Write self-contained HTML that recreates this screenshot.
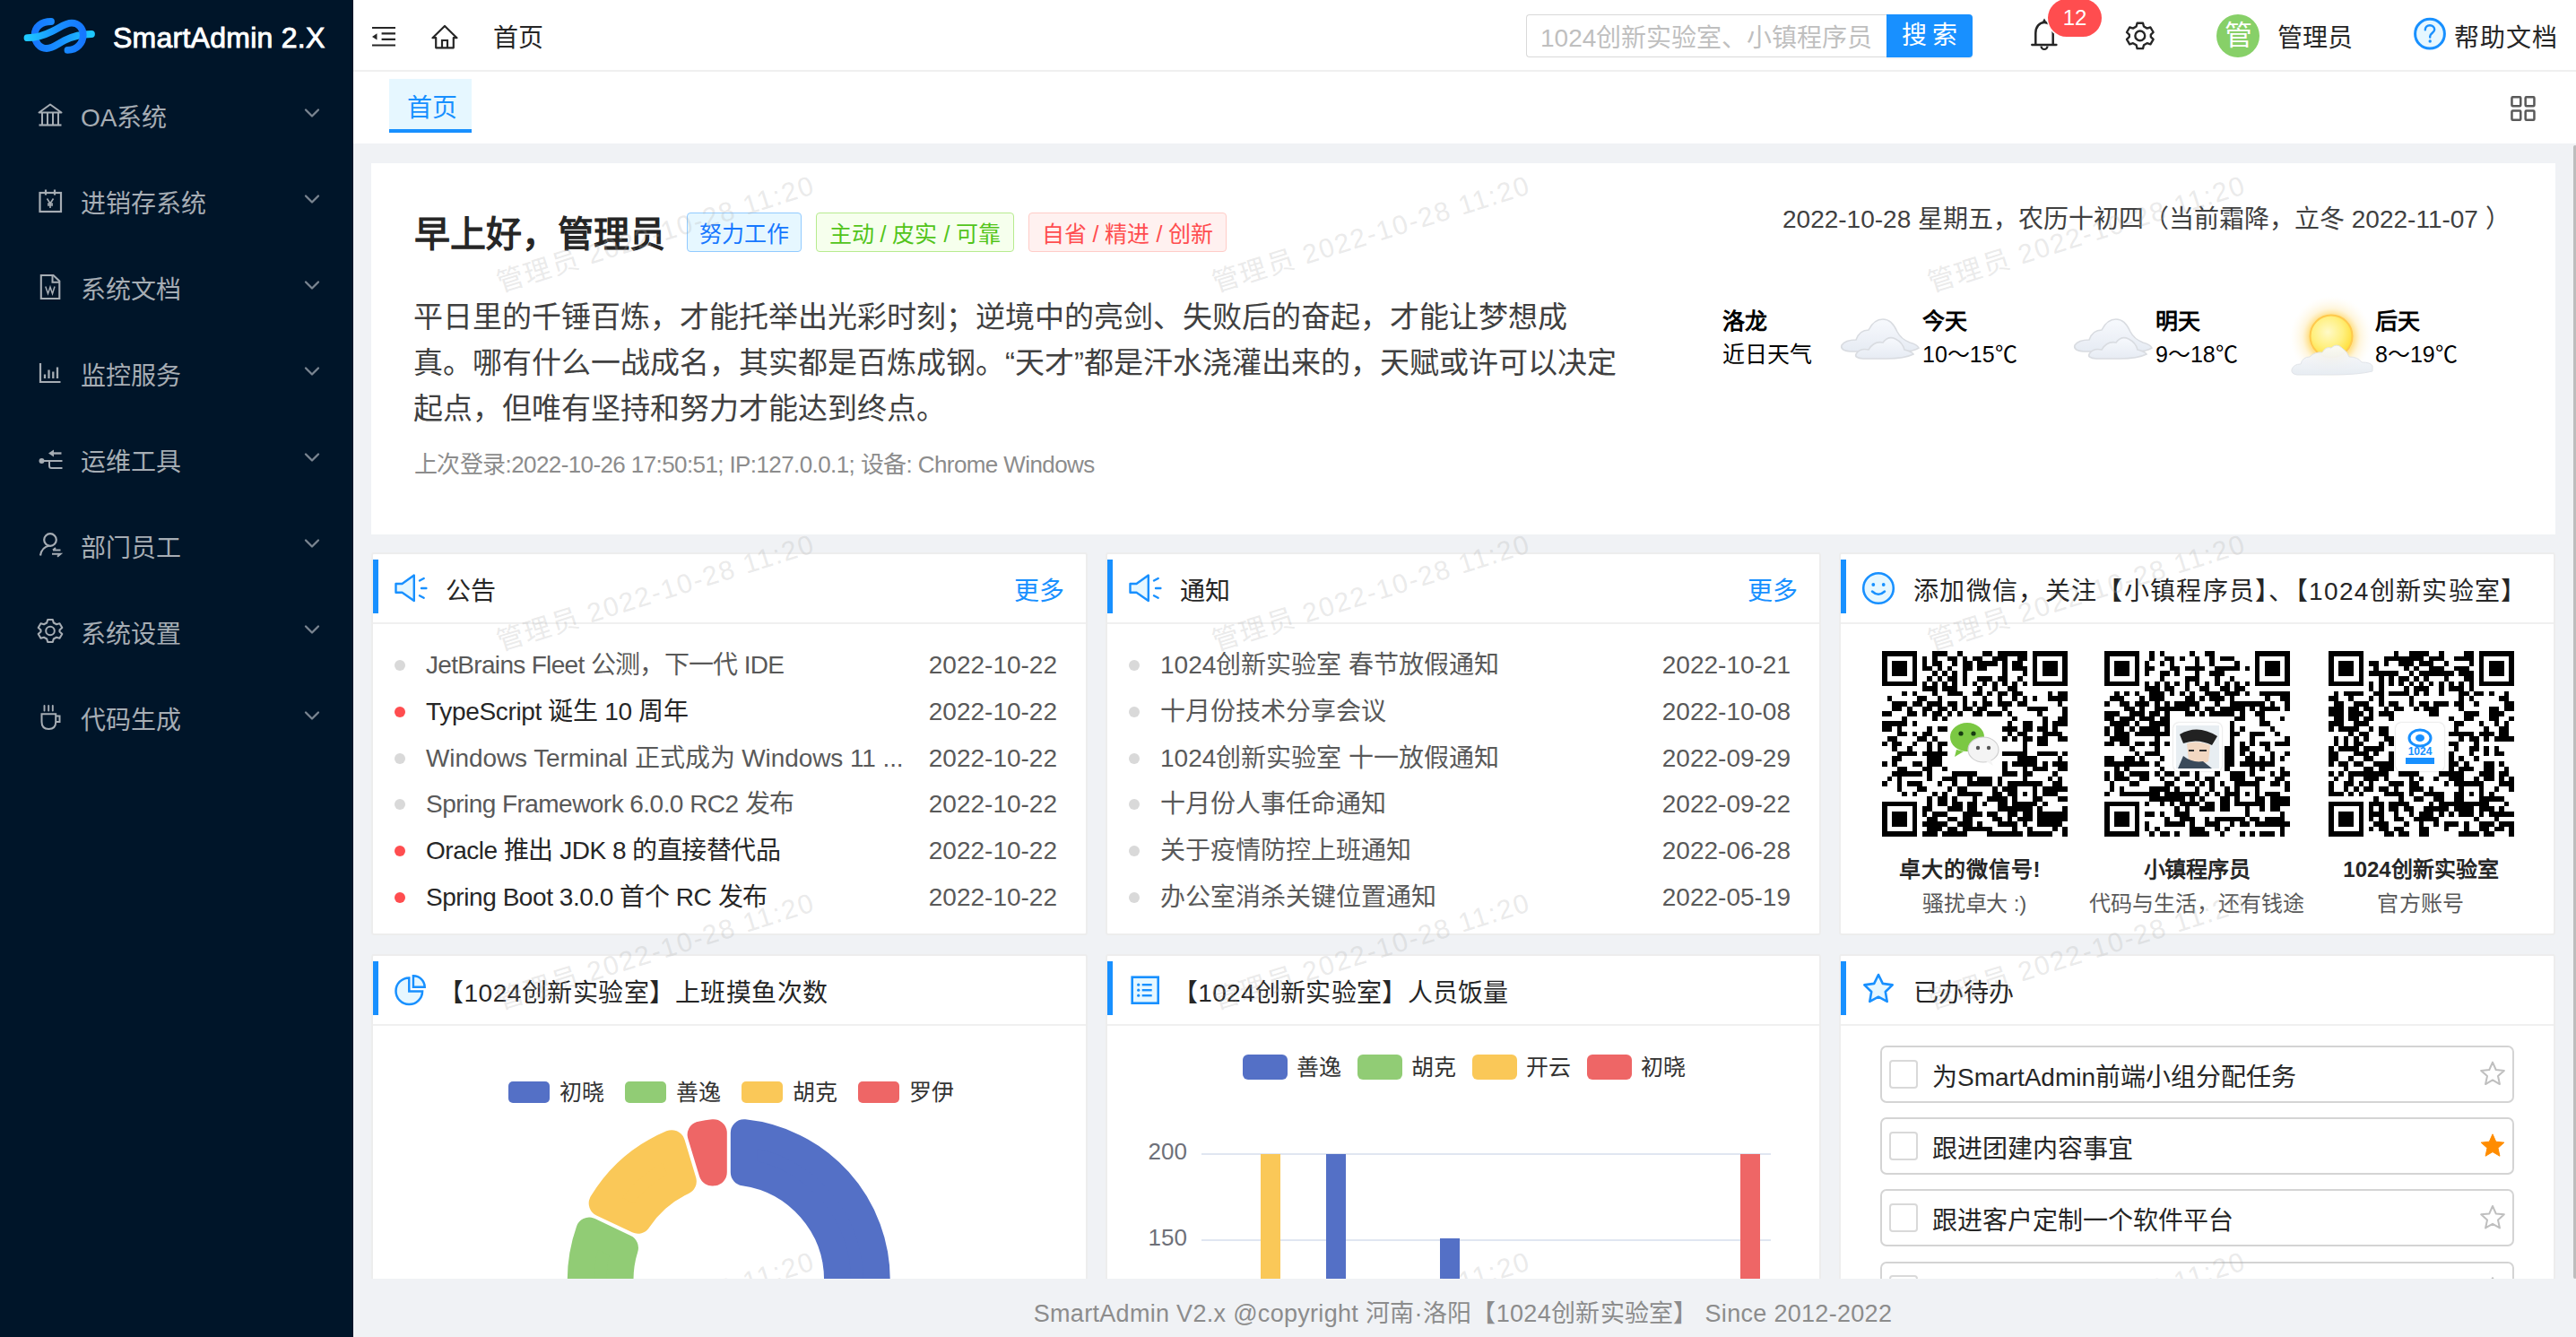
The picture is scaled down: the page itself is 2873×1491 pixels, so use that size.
<!DOCTYPE html>
<html lang="zh-CN"><head><meta charset="utf-8">
<style>
*{box-sizing:border-box;margin:0;padding:0}
html,body{width:2873px;height:1491px;overflow:hidden;background:#f0f2f5;font-family:"Liberation Sans",sans-serif;color:rgba(0,0,0,.85)}
.a{position:absolute;white-space:nowrap}
#sider{position:absolute;left:0;top:0;width:394px;height:1491px;background:#001529}
.mi{position:absolute;left:0;width:394px;height:96px}
.mi svg{position:absolute}
.mi .t{position:absolute;left:90px;top:3px;font-size:28px;line-height:96px;color:#a6adb4}
#header{position:absolute;left:394px;top:0;width:2479px;height:80px;background:#fff;border-bottom:2px solid #f0f0f0}
#tabs{position:absolute;left:394px;top:80px;width:2479px;height:80px;background:#fff}
.card{position:absolute;background:#fff;border:2px solid #ededed;border-radius:3px}
.card.g{border:0;border-radius:0}
.ch-h{position:absolute;left:0;top:0;right:0;height:78px;border-bottom:2px solid #f0f0f0}
.bar{position:absolute;left:2px;top:7px;width:6px;height:60px;background:#1890ff}
.ttl{position:absolute;top:0;line-height:76px;font-size:28px;color:rgba(0,0,0,.85)}
.tag{font-size:25px;line-height:47px;text-align:center;border-radius:4px}
.wm{font-size:30px;line-height:40px;letter-spacing:1.85px;color:rgba(175,175,175,.27);transform:rotate(-17.5deg);transform-origin:0 100%}
#footer{position:absolute;left:394px;top:1426px;width:2479px;height:65px;background:#f0f2f5;text-align:center;font-size:27px;line-height:78px;color:#8c8c8c;letter-spacing:0.3px;text-indent:-4px}
#sb{position:absolute;left:2870px;top:162px;width:4px;height:1264px;background:#bdbdbd;border-radius:2px}
</style></head>
<body>
<div id="sider">
<svg class="a" style="left:20px;top:15px" width="90" height="50" viewBox="0 0 90 50"><defs><linearGradient id="lg1" x1="0" x2="1" y1="0" y2="0"><stop offset="0" stop-color="#1ec8ff"/><stop offset=".55" stop-color="#1890ff"/><stop offset="1" stop-color="#1677ff"/></linearGradient><linearGradient id="lg2" x1="1" x2="0" y1="0" y2="0"><stop offset="0" stop-color="#1ec8ff"/><stop offset=".55" stop-color="#1890ff"/><stop offset="1" stop-color="#1677ff"/></linearGradient></defs>
<path d="M82 23C72 23 62 25 52 30C44 34 39 39 32 39C24 39 18.7 32 18.7 24C18.7 15 26 9 37 9" fill="none" stroke="url(#lg2)" stroke-width="7.8" stroke-linecap="round"/>
<path d="M10.5 27.2C20 27.2 28 25 38 20C48 15 53 10.7 60 10.7C67 10.7 72.7 16 72.7 24C72.7 33 66 40.8 55.5 40.9" fill="none" stroke="url(#lg1)" stroke-width="7.8" stroke-linecap="round"/></svg>
<div class="a" style="left:126px;top:20px;font-size:32px;line-height:44px;color:#fff;-webkit-text-stroke:0.9px #fff;letter-spacing:0.25px">SmartAdmin 2.X</div>
<div class="mi" style="top:81px"><svg class="ic" viewBox="0 0 40 40" style="left:38px;top:27px;width:40px;height:40px"><path d="M18 8.5 L5.5 17.5 H30.5 Z" fill="none" stroke="#a6adb4" stroke-width="2" stroke-linejoin="round"/><path d="M9 18v13M15 18v13M21 18v13M27 18v13" stroke="#a6adb4" stroke-width="2"/><path d="M5.5 31.5H30.5" stroke="#a6adb4" stroke-width="2.2"/></svg><span class="t">OA系统</span><svg class="ch" viewBox="0 0 40 40" style="left:330px;top:29px;width:40px;height:40px"><path d="M11 12.5L18 19.5L25 12.5" fill="none" stroke="#7a8591" stroke-width="2.3" stroke-linecap="round" stroke-linejoin="round"/></svg></div>
<div class="mi" style="top:177px"><svg class="ic" viewBox="0 0 40 40" style="left:38px;top:27px;width:40px;height:40px"><rect x="6.5" y="11" width="23.5" height="21" fill="none" stroke="#a6adb4" stroke-width="2.2"/><path d="M13 7.5v6M23 7.5v6" stroke="#a6adb4" stroke-width="2.2"/><path d="M14.5 17.5L18 23L21.5 17.5M15 25H21M15 23.2H21M18 22.5V28" fill="none" stroke="#a6adb4" stroke-width="1.6"/></svg><span class="t">进销存系统</span><svg class="ch" viewBox="0 0 40 40" style="left:330px;top:29px;width:40px;height:40px"><path d="M11 12.5L18 19.5L25 12.5" fill="none" stroke="#7a8591" stroke-width="2.3" stroke-linecap="round" stroke-linejoin="round"/></svg></div>
<div class="mi" style="top:273px"><svg class="ic" viewBox="0 0 40 40" style="left:38px;top:27px;width:40px;height:40px"><path d="M7.8 7H21.5L28.3 13.5V33H7.8Z" fill="none" stroke="#a6adb4" stroke-width="2.1" stroke-linejoin="miter"/><path d="M20.5 7.5V14.8H28" fill="none" stroke="#a6adb4" stroke-width="2"/><path d="M12.8 19.5L15.5 27.5L18 20L20.5 27.5L23 19.5" fill="none" stroke="#a6adb4" stroke-width="1.5"/></svg><span class="t">系统文档</span><svg class="ch" viewBox="0 0 40 40" style="left:330px;top:29px;width:40px;height:40px"><path d="M11 12.5L18 19.5L25 12.5" fill="none" stroke="#7a8591" stroke-width="2.3" stroke-linecap="round" stroke-linejoin="round"/></svg></div>
<div class="mi" style="top:369px"><svg class="ic" viewBox="0 0 40 40" style="left:38px;top:27px;width:40px;height:40px"><path d="M7 9V30H29.5" fill="none" stroke="#a6adb4" stroke-width="2.2"/><path d="M12 21.5V26M16.5 16.5V26M21.3 18.5V26M26 13.5V26" stroke="#a6adb4" stroke-width="2.3"/></svg><span class="t">监控服务</span><svg class="ch" viewBox="0 0 40 40" style="left:330px;top:29px;width:40px;height:40px"><path d="M11 12.5L18 19.5L25 12.5" fill="none" stroke="#7a8591" stroke-width="2.3" stroke-linecap="round" stroke-linejoin="round"/></svg></div>
<div class="mi" style="top:465px"><svg class="ic" viewBox="0 0 40 40" style="left:38px;top:27px;width:40px;height:40px"><path d="M22 9.5L16 13.5L22 17.5Z" fill="#a6adb4"/><path d="M21 13.5H30.5" stroke="#a6adb4" stroke-width="2.4"/><circle cx="8.5" cy="22" r="3" fill="#a6adb4"/><path d="M9 22H31.5M17 22.5V27.5Q17 30 19.5 30H31.5" fill="none" stroke="#a6adb4" stroke-width="2"/></svg><span class="t">运维工具</span><svg class="ch" viewBox="0 0 40 40" style="left:330px;top:29px;width:40px;height:40px"><path d="M11 12.5L18 19.5L25 12.5" fill="none" stroke="#7a8591" stroke-width="2.3" stroke-linecap="round" stroke-linejoin="round"/></svg></div>
<div class="mi" style="top:561px"><svg class="ic" viewBox="0 0 40 40" style="left:38px;top:27px;width:40px;height:40px"><circle cx="18" cy="14" r="6.8" fill="none" stroke="#a6adb4" stroke-width="2.2"/><path d="M7 31.5C8 25 12 21.5 17 20.5" fill="none" stroke="#a6adb4" stroke-width="2.2"/><path d="M21 25.5H29.5M24 23L21 25.5M20 29.8H29.5L26 32.8" fill="none" stroke="#a6adb4" stroke-width="2"/></svg><span class="t">部门员工</span><svg class="ch" viewBox="0 0 40 40" style="left:330px;top:29px;width:40px;height:40px"><path d="M11 12.5L18 19.5L25 12.5" fill="none" stroke="#7a8591" stroke-width="2.3" stroke-linecap="round" stroke-linejoin="round"/></svg></div>
<div class="mi" style="top:657px"><svg class="ic" viewBox="0 0 40 40" style="left:38px;top:27px;width:40px;height:40px"><g transform="translate(18 19.5)"><path d="M-2.8 -12.5H2.8L3.8 -9L7 -7.3L10.5 -8.2L13.3 -3.5L10.5 -1V1L13.3 3.5L10.5 8.2L7 7.3L3.8 9L2.8 12.5H-2.8L-3.8 9L-7 7.3L-10.5 8.2L-13.3 3.5L-10.5 1V-1L-13.3 -3.5L-10.5 -8.2L-7 -7.3L-3.8 -9Z" fill="none" stroke="#a6adb4" stroke-width="2.1" stroke-linejoin="round"/><circle cx="0" cy="0" r="4.8" fill="none" stroke="#a6adb4" stroke-width="2"/></g></svg><span class="t">系统设置</span><svg class="ch" viewBox="0 0 40 40" style="left:330px;top:29px;width:40px;height:40px"><path d="M11 12.5L18 19.5L25 12.5" fill="none" stroke="#7a8591" stroke-width="2.3" stroke-linecap="round" stroke-linejoin="round"/></svg></div>
<div class="mi" style="top:753px"><svg class="ic" viewBox="0 0 40 40" style="left:38px;top:27px;width:40px;height:40px"><path d="M11.5 7v5.5M16.2 7v5.5M20.8 7v5.5" stroke="#a6adb4" stroke-width="1.9" stroke-linecap="round"/><path d="M8.5 16.3H24.2V25Q24.2 33 16.3 33Q8.5 33 8.5 25Z" fill="none" stroke="#a6adb4" stroke-width="2"/><path d="M24.2 18.5H28.5V25H24.2" fill="none" stroke="#a6adb4" stroke-width="2"/></svg><span class="t">代码生成</span><svg class="ch" viewBox="0 0 40 40" style="left:330px;top:29px;width:40px;height:40px"><path d="M11 12.5L18 19.5L25 12.5" fill="none" stroke="#7a8591" stroke-width="2.3" stroke-linecap="round" stroke-linejoin="round"/></svg></div>
</div>
<div id="header"></div>
<svg class="a" style="left:410px;top:20px" width="40" height="40" viewBox="410 20 40 40"><path d="M415 31H441M425.6 37.3H441M425.6 43.8H441M415 50.5H441" stroke="#262626" stroke-width="2.2"/><path d="M420.5 37.2V44.6L415 40.9Z" fill="#262626"/></svg>
<svg class="a" style="left:476px;top:20px" width="40" height="40" viewBox="476 20 40 40"><path d="M496 29L482.5 42.2H486.2V53.3H505.8V42.2H509.5Z" fill="none" stroke="#262626" stroke-width="2.2" stroke-linejoin="round"/><path d="M493 53.3V45H499V53.3" fill="none" stroke="#262626" stroke-width="2.2"/></svg>
<div class="a" style="left:550px;top:23px;font-size:28px;line-height:40px;color:#262626">首页</div>
<div class="a" style="left:1702px;top:16px;width:403px;height:48px;border:1.5px solid #d9d9d9;border-right:0;border-radius:4px 0 0 4px;background:#fff"></div>
<div class="a" style="left:1718px;top:23px;font-size:28px;line-height:40px;color:#bfbfbf">1024创新实验室、小镇程序员</div>
<div class="a" style="left:2104px;top:16px;width:96px;height:48px;background:#1890ff;border-radius:0 4px 4px 0;box-shadow:0 2px 0 rgba(0,0,0,.045);color:#fff;font-size:28px;line-height:48px;text-align:center;letter-spacing:6px;text-indent:6px">搜索</div>
<svg class="a" style="left:2255px;top:10px" width="50" height="50" viewBox="2255 10 50 50"><path d="M2266.2 50H2293.5" stroke="#262626" stroke-width="2.3" stroke-linecap="round"/><path d="M2270.3 50V37C2270.3 30 2274.5 25 2280 25C2285.5 25 2289.7 30 2289.7 37V50" fill="none" stroke="#262626" stroke-width="2.5"/><path d="M2280 20.5L2282 24H2278Z" fill="#262626"/><path d="M2276.5 51.5A3.5 3.5 0 0 0 2283.5 51.5" fill="none" stroke="#262626" stroke-width="2.2"/></svg>
<div class="a" style="left:2284px;top:-1px;width:60px;height:42px;border-radius:21px;background:#ff4d4f;box-shadow:0 0 0 1.5px #fff;color:#fff;font-size:24px;line-height:42px;text-align:center">12</div>
<svg class="a" style="left:2365px;top:18px" width="42" height="44" viewBox="-21 -22 42 44"><path d="M-3.2 -14.2H3.2L4.2 -10.4L7.8 -8.3L11.6 -9.4L14.8 -3.9L12 -1.2V1.2L14.8 3.9L11.6 9.4L7.8 8.3L4.2 10.4L3.2 14.2H-3.2L-4.2 10.4L-7.8 8.3L-11.6 9.4L-14.8 3.9L-12 1.2V-1.2L-14.8 -3.9L-11.6 -9.4L-7.8 -8.3L-4.2 -10.4Z" fill="none" stroke="#262626" stroke-width="2.4" stroke-linejoin="round" transform="translate(0.8 -0.1)"/><circle cx="0.8" cy="-0.1" r="5.4" fill="none" stroke="#262626" stroke-width="2.4"/></svg>
<div class="a" style="left:2472px;top:16px;width:48px;height:48px;border-radius:50%;background:#87d068;color:#fff;font-size:31px;line-height:48px;text-align:center">管</div>
<div class="a" style="left:2540px;top:23px;font-size:28px;line-height:40px;color:#262626">管理员</div>
<svg class="a" style="left:2690px;top:18px" width="40" height="40" viewBox="2690 18 40 40"><circle cx="2710" cy="37.7" r="16.4" fill="#e6f7ff" stroke="#1890ff" stroke-width="3"/><path d="M2704.8 33.2C2704.8 30.2 2707 28.2 2710 28.2C2713 28.2 2715.2 30.2 2715.2 33C2715.2 36.5 2710.2 37 2710.2 40.6V41.5" fill="none" stroke="#1890ff" stroke-width="2.4" stroke-linecap="round"/><circle cx="2710.2" cy="46" r="1.7" fill="#1890ff"/></svg>
<div class="a" style="left:2737px;top:23px;font-size:28px;line-height:40px;color:#262626;letter-spacing:1px">帮助文档</div>
<div id="tabs"></div>
<div class="a" style="left:434px;top:88px;width:92px;height:60px;background:#e6f7ff;border-bottom:4px solid #1890ff"></div>
<div class="a" style="left:454px;top:101px;font-size:28px;line-height:40px;color:#1890ff">首页</div>
<svg class="a" style="left:2790px;top:100px" width="50" height="50" viewBox="2790 100 50 50"><g fill="none" stroke="#595959" stroke-width="2.5"><rect x="2801.45" y="108.25" width="9.8" height="10.1" rx="1"/><rect x="2816.65" y="108.25" width="9.8" height="10.1" rx="1"/><rect x="2801.45" y="123.55" width="9.8" height="10.1" rx="1"/><rect x="2816.65" y="123.55" width="9.8" height="10.1" rx="1"/></g></svg>
<div id="content"></div>
<div class="card g" style="left:414px;top:182px;width:2436px;height:414px"></div>
<div class="a" style="left:462px;top:231px;font-size:40px;line-height:60px;font-weight:bold;color:#262626">早上好，管理员</div>
<div class="a tag" style="left:766px;top:237px;width:128px;height:44px;background:#e6f7ff;border:1.5px solid #91caff;color:#1677ff">努力工作</div>
<div class="a tag" style="left:910px;top:237px;width:221px;height:44px;background:#f6ffed;border:1.5px solid #b7eb8f;color:#52c41a">主动 / 皮实 / 可靠</div>
<div class="a tag" style="left:1147px;top:237px;width:221px;height:44px;background:#fff1f0;border:1.5px solid #ffccc7;color:#ff4d4f">自省 / 精进 / 创新</div>
<div class="a" style="left:461px;top:328px;font-size:33px;line-height:51px;color:#404040;white-space:normal;width:1400px">平日里的千锤百炼，才能托举出光彩时刻；逆境中的亮剑、失败后的奋起，才能让梦想成<br>真。哪有什么一战成名，其实都是百炼成钢。“天才”都是汗水浇灌出来的，天赋或许可以决定<br>起点，但唯有坚持和努力才能达到终点。</div>
<div class="a" style="left:462px;top:500px;font-size:26px;line-height:36px;color:#8c8c8c;letter-spacing:-0.6px">上次登录:2022-10-26 17:50:51; IP:127.0.0.1; 设备: Chrome Windows</div>
<div class="a" style="left:1988px;top:225px;font-size:28px;line-height:40px;color:#404040">2022-10-28 星期五，农历十初四（当前霜降，立冬 2022-11-07 ）</div>
<div class="a" style="left:1921px;top:341px;font-size:25px;line-height:34px;font-weight:bold;color:#000">洛龙</div>
<div class="a" style="left:1921px;top:378px;font-size:25px;line-height:34px;color:#000">近日天气</div>
<svg class="a" style="left:2044px;top:348px" width="100" height="56" viewBox="0 0 100 56"><defs><linearGradient id="cg1" x1="0" y1="0" x2="0" y2="1"><stop offset="0" stop-color="#f7f9fd"/><stop offset="1" stop-color="#e6ebf3"/></linearGradient></defs><g fill="url(#cg1)" stroke="#d9dce1" stroke-width="1.6"><path d="M10 37Q14 31 26 31Q30 20 40 20Q46 8 56 8Q66 8 72 22Q76 30 86 34Q94 36 96 40Q90 44 78 44H20Q8 43 10 37Z"/><path d="M26 47Q30 40 40 42Q46 32 56 34Q62 26 70 30Q78 34 80 42Q88 44 90 47Q80 52 60 52H34Q24 51 26 47Z"/></g></svg>
<div class="a" style="left:2144px;top:341px;font-size:25px;line-height:34px;font-weight:bold;color:#000">今天</div>
<div class="a" style="left:2144px;top:378px;font-size:25px;line-height:34px;color:#000">10～15℃</div>
<svg class="a" style="left:2304px;top:348px" width="100" height="56" viewBox="0 0 100 56"><defs><linearGradient id="cg2" x1="0" y1="0" x2="0" y2="1"><stop offset="0" stop-color="#f7f9fd"/><stop offset="1" stop-color="#e6ebf3"/></linearGradient></defs><g fill="url(#cg2)" stroke="#d9dce1" stroke-width="1.6"><path d="M10 37Q14 31 26 31Q30 20 40 20Q46 8 56 8Q66 8 72 22Q76 30 86 34Q94 36 96 40Q90 44 78 44H20Q8 43 10 37Z"/><path d="M26 47Q30 40 40 42Q46 32 56 34Q62 26 70 30Q78 34 80 42Q88 44 90 47Q80 52 60 52H34Q24 51 26 47Z"/></g></svg>
<div class="a" style="left:2404px;top:341px;font-size:25px;line-height:34px;font-weight:bold;color:#000">明天</div>
<div class="a" style="left:2404px;top:378px;font-size:25px;line-height:34px;color:#000">9～18℃</div>
<svg class="a" style="left:2550px;top:326px" width="100" height="96" viewBox="0 0 100 96"><defs><radialGradient id="sg" cx="50" cy="50" r="46" gradientUnits="userSpaceOnUse"><stop offset="0" stop-color="#ffd86a" stop-opacity=".9"/><stop offset=".55" stop-color="#ffd86a" stop-opacity=".75"/><stop offset=".7" stop-color="#ffeab0" stop-opacity=".45"/><stop offset="1" stop-color="#fff8e6" stop-opacity="0"/></radialGradient><radialGradient id="sg2" cx=".42" cy=".4" r=".6"><stop offset="0" stop-color="#fffac8"/><stop offset=".6" stop-color="#fff080"/><stop offset="1" stop-color="#ffe040"/></radialGradient><linearGradient id="sc" x1="0" y1="0" x2="0" y2="1"><stop offset="0" stop-color="#fbfcfe"/><stop offset="1" stop-color="#e6ebf2"/></linearGradient></defs><circle cx="50" cy="50" r="46" fill="url(#sg)"/><circle cx="50" cy="49" r="23.5" fill="url(#sg2)" stroke="#ffc94d" stroke-width="2"/><path d="M6 86Q8 80 16 80Q18 72 26 72Q32 66 40 67Q44 60 50 62Q56 56 62 62Q68 66 70 72Q80 72 84 78Q94 78 96 82V88Q80 92 50 92H12Q5 91 6 86Z" fill="url(#sc)" stroke="#dfe3e8" stroke-width="1" opacity=".92"/></svg>
<div class="a" style="left:2649px;top:341px;font-size:25px;line-height:34px;font-weight:bold;color:#000">后天</div>
<div class="a" style="left:2649px;top:378px;font-size:25px;line-height:34px;color:#000">8～19℃</div>

<!--MID-->
<div class="card" style="left:414px;top:616px;width:799px;height:427px"></div>
<div class="a" style="left:416px;top:624px;width:6px;height:60px;background:#1890ff"></div>
<div class="a" style="left:416px;top:694px;width:795px;height:2px;background:#f0f0f0"></div>
<svg class="a" style="left:414px;top:616px" width="80" height="80" viewBox="0 0 80 80"><path d="M27.5 35H34.5L47.8 25.6V54L34.5 44.8H27.5Z" fill="#e6f7ff" stroke="#1890ff" stroke-width="2.4" stroke-linejoin="round"/><path d="M54 31.5L58.7 29M56 40H61.4M54 48.3L58.7 50.8" stroke="#1890ff" stroke-width="2.4" stroke-linecap="round"/></svg>
<div class="a" style="left:497px;top:640px;font-size:28px;line-height:40px;color:#262626;letter-spacing:0px">公告</div>
<div class="a" style="left:1131px;top:640px;font-size:28px;line-height:40px;color:#1890ff">更多</div>
<div class="a" style="left:440px;top:736.0px;width:12px;height:12px;border-radius:50%;background:#d9d9d9"></div>
<div class="a" style="left:475px;top:722.0px;font-size:28px;line-height:40px;color:#595959;letter-spacing:-0.68px">JetBrains Fleet 公测，下一代 IDE</div>
<div class="a" style="left:1035px;top:722.0px;width:144px;text-align:right;font-size:28px;line-height:40px;color:#595959">2022-10-22</div>
<div class="a" style="left:440px;top:787.8px;width:12px;height:12px;border-radius:50%;background:#ff4d4f"></div>
<div class="a" style="left:475px;top:773.8px;font-size:28px;line-height:40px;color:#262626;letter-spacing:-0.33px">TypeScript 诞生 10 周年</div>
<div class="a" style="left:1035px;top:773.8px;width:144px;text-align:right;font-size:28px;line-height:40px;color:#595959">2022-10-22</div>
<div class="a" style="left:440px;top:839.6px;width:12px;height:12px;border-radius:50%;background:#d9d9d9"></div>
<div class="a" style="left:475px;top:825.6px;font-size:28px;line-height:40px;color:#595959;letter-spacing:-0.09px">Windows Terminal 正式成为 Windows 11 ...</div>
<div class="a" style="left:1035px;top:825.6px;width:144px;text-align:right;font-size:28px;line-height:40px;color:#595959">2022-10-22</div>
<div class="a" style="left:440px;top:891.4px;width:12px;height:12px;border-radius:50%;background:#d9d9d9"></div>
<div class="a" style="left:475px;top:877.4px;font-size:28px;line-height:40px;color:#595959;letter-spacing:-0.54px">Spring Framework 6.0.0 RC2 发布</div>
<div class="a" style="left:1035px;top:877.4px;width:144px;text-align:right;font-size:28px;line-height:40px;color:#595959">2022-10-22</div>
<div class="a" style="left:440px;top:943.2px;width:12px;height:12px;border-radius:50%;background:#ff4d4f"></div>
<div class="a" style="left:475px;top:929.2px;font-size:28px;line-height:40px;color:#262626;letter-spacing:-0.48px">Oracle 推出 JDK 8 的直接替代品</div>
<div class="a" style="left:1035px;top:929.2px;width:144px;text-align:right;font-size:28px;line-height:40px;color:#595959">2022-10-22</div>
<div class="a" style="left:440px;top:995.0px;width:12px;height:12px;border-radius:50%;background:#ff4d4f"></div>
<div class="a" style="left:475px;top:981.0px;font-size:28px;line-height:40px;color:#262626;letter-spacing:-0.44px">Spring Boot 3.0.0 首个 RC 发布</div>
<div class="a" style="left:1035px;top:981.0px;width:144px;text-align:right;font-size:28px;line-height:40px;color:#595959">2022-10-22</div>
<div class="card" style="left:1233px;top:616px;width:798px;height:427px"></div>
<div class="a" style="left:1235px;top:624px;width:6px;height:60px;background:#1890ff"></div>
<div class="a" style="left:1235px;top:694px;width:794px;height:2px;background:#f0f0f0"></div>
<svg class="a" style="left:1233px;top:616px" width="80" height="80" viewBox="0 0 80 80"><path d="M27.5 35H34.5L47.8 25.6V54L34.5 44.8H27.5Z" fill="#e6f7ff" stroke="#1890ff" stroke-width="2.4" stroke-linejoin="round"/><path d="M54 31.5L58.7 29M56 40H61.4M54 48.3L58.7 50.8" stroke="#1890ff" stroke-width="2.4" stroke-linecap="round"/></svg>
<div class="a" style="left:1316px;top:640px;font-size:28px;line-height:40px;color:#262626;letter-spacing:0px">通知</div>
<div class="a" style="left:1949px;top:640px;font-size:28px;line-height:40px;color:#1890ff">更多</div>
<div class="a" style="left:1259px;top:736.0px;width:12px;height:12px;border-radius:50%;background:#d9d9d9"></div>
<div class="a" style="left:1294px;top:722.0px;font-size:28px;line-height:40px;color:#595959">1024创新实验室 春节放假通知</div>
<div class="a" style="left:1853px;top:722.0px;width:144px;text-align:right;font-size:28px;line-height:40px;color:#595959">2022-10-21</div>
<div class="a" style="left:1259px;top:787.8px;width:12px;height:12px;border-radius:50%;background:#d9d9d9"></div>
<div class="a" style="left:1294px;top:773.8px;font-size:28px;line-height:40px;color:#595959">十月份技术分享会议</div>
<div class="a" style="left:1853px;top:773.8px;width:144px;text-align:right;font-size:28px;line-height:40px;color:#595959">2022-10-08</div>
<div class="a" style="left:1259px;top:839.6px;width:12px;height:12px;border-radius:50%;background:#d9d9d9"></div>
<div class="a" style="left:1294px;top:825.6px;font-size:28px;line-height:40px;color:#595959">1024创新实验室 十一放假通知</div>
<div class="a" style="left:1853px;top:825.6px;width:144px;text-align:right;font-size:28px;line-height:40px;color:#595959">2022-09-29</div>
<div class="a" style="left:1259px;top:891.4px;width:12px;height:12px;border-radius:50%;background:#d9d9d9"></div>
<div class="a" style="left:1294px;top:877.4px;font-size:28px;line-height:40px;color:#595959">十月份人事任命通知</div>
<div class="a" style="left:1853px;top:877.4px;width:144px;text-align:right;font-size:28px;line-height:40px;color:#595959">2022-09-22</div>
<div class="a" style="left:1259px;top:943.2px;width:12px;height:12px;border-radius:50%;background:#d9d9d9"></div>
<div class="a" style="left:1294px;top:929.2px;font-size:28px;line-height:40px;color:#595959">关于疫情防控上班通知</div>
<div class="a" style="left:1853px;top:929.2px;width:144px;text-align:right;font-size:28px;line-height:40px;color:#595959">2022-06-28</div>
<div class="a" style="left:1259px;top:995.0px;width:12px;height:12px;border-radius:50%;background:#d9d9d9"></div>
<div class="a" style="left:1294px;top:981.0px;font-size:28px;line-height:40px;color:#595959">办公室消杀关键位置通知</div>
<div class="a" style="left:1853px;top:981.0px;width:144px;text-align:right;font-size:28px;line-height:40px;color:#595959">2022-05-19</div>
<div class="card" style="left:2051px;top:616px;width:799px;height:427px"></div>
<div class="a" style="left:2053px;top:624px;width:6px;height:60px;background:#1890ff"></div>
<div class="a" style="left:2053px;top:694px;width:795px;height:2px;background:#f0f0f0"></div>
<svg class="a" style="left:2051px;top:616px" width="80" height="80" viewBox="0 0 80 80"><circle cx="44" cy="40" r="16.8" fill="#e6f7ff" stroke="#1890ff" stroke-width="2.6"/><circle cx="38.3" cy="36" r="1.9" fill="#1890ff"/><circle cx="49.7" cy="36" r="1.9" fill="#1890ff"/><path d="M37 43.5Q44 50 51 43.5" fill="none" stroke="#1890ff" stroke-width="2.5" stroke-linecap="round"/></svg>
<div class="a" style="left:2134px;top:640px;font-size:28px;line-height:40px;color:#262626;letter-spacing:1.32px">添加微信，关注【小镇程序员】、【1024创新实验室】</div>
<svg class="a" style="left:2099px;top:726px" width="207" height="207" viewBox="0 0 37 37" shape-rendering="crispEdges"><path d="M0 0h7v1h-7zM10 0h3v1h-3zM15 0h1v1h-1zM20 0h2v1h-2zM23 0h6v1h-6zM30 0h7v1h-7zM0 1h1v1h-1zM6 1h1v1h-1zM8 1h1v1h-1zM10 1h1v1h-1zM13 1h2v1h-2zM16 1h1v1h-1zM18 1h2v1h-2zM22 1h3v1h-3zM27 1h2v1h-2zM30 1h1v1h-1zM36 1h1v1h-1zM0 2h1v1h-1zM2 2h3v1h-3zM6 2h1v1h-1zM8 2h1v1h-1zM10 2h2v1h-2zM14 2h1v1h-1zM16 2h2v1h-2zM19 2h4v1h-4zM24 2h1v1h-1zM26 2h2v1h-2zM30 2h1v1h-1zM32 2h3v1h-3zM36 2h1v1h-1zM0 3h1v1h-1zM2 3h3v1h-3zM6 3h1v1h-1zM8 3h2v1h-2zM11 3h1v1h-1zM13 3h1v1h-1zM16 3h2v1h-2zM19 3h2v1h-2zM24 3h1v1h-1zM26 3h3v1h-3zM30 3h1v1h-1zM32 3h3v1h-3zM36 3h1v1h-1zM0 4h1v1h-1zM2 4h3v1h-3zM6 4h1v1h-1zM10 4h1v1h-1zM12 4h1v1h-1zM14 4h1v1h-1zM16 4h1v1h-1zM24 4h1v1h-1zM28 4h1v1h-1zM30 4h1v1h-1zM32 4h3v1h-3zM36 4h1v1h-1zM0 5h1v1h-1zM6 5h1v1h-1zM9 5h1v1h-1zM11 5h1v1h-1zM13 5h2v1h-2zM16 5h1v1h-1zM19 5h3v1h-3zM23 5h2v1h-2zM27 5h1v1h-1zM30 5h1v1h-1zM36 5h1v1h-1zM0 6h7v1h-7zM8 6h1v1h-1zM10 6h1v1h-1zM12 6h1v1h-1zM14 6h1v1h-1zM16 6h1v1h-1zM18 6h1v1h-1zM20 6h1v1h-1zM22 6h1v1h-1zM24 6h1v1h-1zM26 6h1v1h-1zM28 6h1v1h-1zM30 6h7v1h-7zM8 7h3v1h-3zM12 7h3v1h-3zM19 7h1v1h-1zM22 7h1v1h-1zM25 7h2v1h-2zM4 8h1v1h-1zM6 8h1v1h-1zM10 8h1v1h-1zM13 8h3v1h-3zM18 8h2v1h-2zM21 8h1v1h-1zM23 8h2v1h-2zM26 8h2v1h-2zM33 8h1v1h-1zM35 8h2v1h-2zM1 9h1v1h-1zM7 9h2v1h-2zM11 9h1v1h-1zM16 9h1v1h-1zM20 9h1v1h-1zM23 9h1v1h-1zM26 9h1v1h-1zM28 9h1v1h-1zM30 9h1v1h-1zM33 9h4v1h-4zM2 10h3v1h-3zM6 10h2v1h-2zM9 10h3v1h-3zM13 10h2v1h-2zM16 10h1v1h-1zM18 10h1v1h-1zM20 10h2v1h-2zM23 10h3v1h-3zM27 10h2v1h-2zM35 10h1v1h-1zM2 11h2v1h-2zM5 11h1v1h-1zM8 11h2v1h-2zM11 11h2v1h-2zM14 11h1v1h-1zM16 11h2v1h-2zM19 11h2v1h-2zM24 11h1v1h-1zM29 11h4v1h-4zM36 11h1v1h-1zM0 12h2v1h-2zM5 12h2v1h-2zM8 12h1v1h-1zM10 12h2v1h-2zM13 12h1v1h-1zM15 12h1v1h-1zM18 12h2v1h-2zM21 12h3v1h-3zM25 12h1v1h-1zM31 12h1v1h-1zM36 12h1v1h-1zM4 13h1v1h-1zM10 13h1v1h-1zM12 13h1v1h-1zM26 13h1v1h-1zM32 13h1v1h-1zM35 13h2v1h-2zM0 14h5v1h-5zM6 14h1v1h-1zM25 14h1v1h-1zM28 14h2v1h-2zM32 14h1v1h-1zM34 14h3v1h-3zM0 15h2v1h-2zM3 15h1v1h-1zM9 15h1v1h-1zM11 15h2v1h-2zM24 15h3v1h-3zM28 15h2v1h-2zM31 15h2v1h-2zM34 15h1v1h-1zM3 16h2v1h-2zM6 16h1v1h-1zM8 16h2v1h-2zM25 16h1v1h-1zM27 16h2v1h-2zM32 16h4v1h-4zM1 17h2v1h-2zM7 17h2v1h-2zM10 17h1v1h-1zM24 17h1v1h-1zM26 17h1v1h-1zM28 17h2v1h-2zM31 17h2v1h-2zM35 17h2v1h-2zM0 18h1v1h-1zM2 18h2v1h-2zM6 18h1v1h-1zM9 18h1v1h-1zM11 18h2v1h-2zM28 18h1v1h-1zM31 18h2v1h-2zM2 19h1v1h-1zM5 19h1v1h-1zM9 19h1v1h-1zM11 19h1v1h-1zM28 19h1v1h-1zM3 20h4v1h-4zM8 20h5v1h-5zM24 20h5v1h-5zM31 20h4v1h-4zM36 20h1v1h-1zM2 21h2v1h-2zM9 21h3v1h-3zM27 21h4v1h-4zM35 21h1v1h-1zM0 22h1v1h-1zM2 22h1v1h-1zM6 22h2v1h-2zM9 22h3v1h-3zM24 22h1v1h-1zM26 22h5v1h-5zM32 22h1v1h-1zM34 22h3v1h-3zM3 23h2v1h-2zM8 23h2v1h-2zM12 23h1v1h-1zM24 23h1v1h-1zM28 23h1v1h-1zM30 23h3v1h-3zM35 23h2v1h-2zM2 24h6v1h-6zM9 24h1v1h-1zM14 24h5v1h-5zM24 24h3v1h-3zM28 24h2v1h-2zM34 24h1v1h-1zM1 25h1v1h-1zM3 25h1v1h-1zM9 25h1v1h-1zM12 25h3v1h-3zM17 25h1v1h-1zM19 25h3v1h-3zM23 25h1v1h-1zM28 25h1v1h-1zM33 25h1v1h-1zM35 25h1v1h-1zM0 26h1v1h-1zM3 26h1v1h-1zM5 26h3v1h-3zM11 26h1v1h-1zM14 26h1v1h-1zM17 26h5v1h-5zM23 26h1v1h-1zM25 26h7v1h-7zM34 26h2v1h-2zM3 27h1v1h-1zM7 27h2v1h-2zM13 27h1v1h-1zM15 27h2v1h-2zM22 27h1v1h-1zM24 27h3v1h-3zM30 27h1v1h-1zM32 27h5v1h-5zM4 28h1v1h-1zM6 28h1v1h-1zM10 28h1v1h-1zM12 28h1v1h-1zM15 28h5v1h-5zM22 28h2v1h-2zM25 28h2v1h-2zM28 28h1v1h-1zM30 28h1v1h-1zM32 28h3v1h-3zM9 29h1v1h-1zM11 29h2v1h-2zM14 29h1v1h-1zM18 29h1v1h-1zM21 29h4v1h-4zM26 29h1v1h-1zM30 29h2v1h-2zM35 29h2v1h-2zM0 30h7v1h-7zM9 30h1v1h-1zM11 30h2v1h-2zM14 30h2v1h-2zM17 30h2v1h-2zM20 30h1v1h-1zM23 30h2v1h-2zM26 30h5v1h-5zM32 30h1v1h-1zM0 31h1v1h-1zM6 31h1v1h-1zM8 31h2v1h-2zM13 31h3v1h-3zM17 31h2v1h-2zM23 31h7v1h-7zM31 31h1v1h-1zM36 31h1v1h-1zM0 32h1v1h-1zM2 32h3v1h-3zM6 32h1v1h-1zM8 32h1v1h-1zM10 32h3v1h-3zM16 32h4v1h-4zM21 32h2v1h-2zM25 32h2v1h-2zM28 32h2v1h-2zM31 32h6v1h-6zM0 33h1v1h-1zM2 33h3v1h-3zM6 33h1v1h-1zM9 33h2v1h-2zM13 33h2v1h-2zM16 33h2v1h-2zM22 33h2v1h-2zM25 33h1v1h-1zM27 33h3v1h-3zM31 33h6v1h-6zM0 34h1v1h-1zM2 34h3v1h-3zM6 34h1v1h-1zM8 34h5v1h-5zM15 34h3v1h-3zM19 34h1v1h-1zM23 34h4v1h-4zM28 34h1v1h-1zM31 34h5v1h-5zM0 35h1v1h-1zM6 35h1v1h-1zM9 35h3v1h-3zM13 35h2v1h-2zM16 35h6v1h-6zM26 35h1v1h-1zM29 35h1v1h-1zM34 35h1v1h-1zM36 35h1v1h-1zM0 36h7v1h-7zM8 36h3v1h-3zM12 36h5v1h-5zM21 36h7v1h-7zM29 36h5v1h-5zM36 36h1v1h-1z" fill="#000"/></svg>
<div class="a" style="left:2047px;top:950px;width:300px;text-align:center;font-size:24px;line-height:40px;font-weight:bold;color:#262626;letter-spacing:1.0px">卓大的微信号!</div>
<div class="a" style="left:2052px;top:988px;width:300px;text-align:center;font-size:24px;line-height:40px;color:#595959;letter-spacing:-0.17px">骚扰卓大 :)</div>
<svg class="a" style="left:2347px;top:726px" width="207" height="207" viewBox="0 0 37 37" shape-rendering="crispEdges"><path d="M0 0h7v1h-7zM9 0h1v1h-1zM11 0h1v1h-1zM17 0h1v1h-1zM20 0h2v1h-2zM30 0h7v1h-7zM0 1h1v1h-1zM6 1h1v1h-1zM9 1h1v1h-1zM12 1h2v1h-2zM15 1h1v1h-1zM18 1h1v1h-1zM21 1h1v1h-1zM23 1h3v1h-3zM30 1h1v1h-1zM36 1h1v1h-1zM0 2h1v1h-1zM2 2h3v1h-3zM6 2h1v1h-1zM8 2h1v1h-1zM11 2h1v1h-1zM13 2h1v1h-1zM18 2h1v1h-1zM21 2h1v1h-1zM26 2h1v1h-1zM30 2h1v1h-1zM32 2h3v1h-3zM36 2h1v1h-1zM0 3h1v1h-1zM2 3h3v1h-3zM6 3h1v1h-1zM8 3h2v1h-2zM13 3h2v1h-2zM16 3h4v1h-4zM22 3h5v1h-5zM28 3h1v1h-1zM30 3h1v1h-1zM32 3h3v1h-3zM36 3h1v1h-1zM0 4h1v1h-1zM2 4h3v1h-3zM6 4h1v1h-1zM8 4h1v1h-1zM11 4h2v1h-2zM14 4h1v1h-1zM18 4h1v1h-1zM21 4h3v1h-3zM30 4h1v1h-1zM32 4h3v1h-3zM36 4h1v1h-1zM0 5h1v1h-1zM6 5h1v1h-1zM11 5h1v1h-1zM16 5h3v1h-3zM22 5h1v1h-1zM25 5h1v1h-1zM30 5h1v1h-1zM36 5h1v1h-1zM0 6h7v1h-7zM8 6h1v1h-1zM10 6h1v1h-1zM12 6h1v1h-1zM14 6h1v1h-1zM16 6h1v1h-1zM18 6h1v1h-1zM20 6h1v1h-1zM22 6h1v1h-1zM24 6h1v1h-1zM26 6h1v1h-1zM28 6h1v1h-1zM30 6h7v1h-7zM8 7h3v1h-3zM12 7h2v1h-2zM16 7h1v1h-1zM19 7h2v1h-2zM23 7h2v1h-2zM26 7h2v1h-2zM2 8h1v1h-1zM4 8h1v1h-1zM6 8h1v1h-1zM9 8h3v1h-3zM13 8h1v1h-1zM15 8h1v1h-1zM17 8h1v1h-1zM20 8h3v1h-3zM24 8h3v1h-3zM28 8h1v1h-1zM31 8h6v1h-6zM1 9h3v1h-3zM7 9h1v1h-1zM9 9h3v1h-3zM16 9h2v1h-2zM19 9h1v1h-1zM21 9h3v1h-3zM25 9h1v1h-1zM32 9h1v1h-1zM35 9h2v1h-2zM0 10h1v1h-1zM3 10h2v1h-2zM6 10h3v1h-3zM10 10h1v1h-1zM12 10h1v1h-1zM14 10h5v1h-5zM22 10h1v1h-1zM25 10h7v1h-7zM33 10h1v1h-1zM36 10h1v1h-1zM4 11h2v1h-2zM7 11h1v1h-1zM10 11h7v1h-7zM18 11h1v1h-1zM20 11h2v1h-2zM23 11h5v1h-5zM29 11h1v1h-1zM31 11h4v1h-4zM36 11h1v1h-1zM0 12h3v1h-3zM5 12h3v1h-3zM9 12h2v1h-2zM12 12h1v1h-1zM16 12h2v1h-2zM19 12h1v1h-1zM21 12h5v1h-5zM27 12h1v1h-1zM30 12h2v1h-2zM0 13h2v1h-2zM3 13h3v1h-3zM7 13h3v1h-3zM11 13h2v1h-2zM26 13h2v1h-2zM31 13h1v1h-1zM35 13h1v1h-1zM1 14h4v1h-4zM6 14h1v1h-1zM9 14h4v1h-4zM25 14h1v1h-1zM31 14h2v1h-2zM0 15h1v1h-1zM2 15h2v1h-2zM5 15h1v1h-1zM7 15h4v1h-4zM12 15h1v1h-1zM25 15h1v1h-1zM27 15h1v1h-1zM33 15h1v1h-1zM0 16h1v1h-1zM2 16h3v1h-3zM6 16h7v1h-7zM25 16h2v1h-2zM29 16h3v1h-3zM34 16h1v1h-1zM1 17h4v1h-4zM10 17h1v1h-1zM25 17h1v1h-1zM29 17h1v1h-1zM36 17h1v1h-1zM0 18h2v1h-2zM3 18h2v1h-2zM6 18h2v1h-2zM9 18h2v1h-2zM12 18h1v1h-1zM25 18h1v1h-1zM27 18h1v1h-1zM29 18h1v1h-1zM31 18h2v1h-2zM34 18h3v1h-3zM5 19h1v1h-1zM10 19h1v1h-1zM24 19h2v1h-2zM27 19h2v1h-2zM32 19h1v1h-1zM6 20h1v1h-1zM8 20h3v1h-3zM24 20h2v1h-2zM27 20h1v1h-1zM29 20h1v1h-1zM33 20h1v1h-1zM36 20h1v1h-1zM0 21h2v1h-2zM4 21h2v1h-2zM7 21h1v1h-1zM11 21h1v1h-1zM24 21h2v1h-2zM28 21h2v1h-2zM31 21h1v1h-1zM33 21h1v1h-1zM35 21h1v1h-1zM0 22h9v1h-9zM10 22h1v1h-1zM24 22h2v1h-2zM27 22h7v1h-7zM2 23h1v1h-1zM4 23h1v1h-1zM11 23h1v1h-1zM24 23h1v1h-1zM29 23h1v1h-1zM31 23h1v1h-1zM35 23h1v1h-1zM0 24h1v1h-1zM2 24h2v1h-2zM5 24h4v1h-4zM10 24h1v1h-1zM12 24h2v1h-2zM15 24h2v1h-2zM18 24h1v1h-1zM22 24h1v1h-1zM25 24h3v1h-3zM29 24h1v1h-1zM33 24h1v1h-1zM35 24h2v1h-2zM0 25h1v1h-1zM2 25h3v1h-3zM7 25h2v1h-2zM11 25h1v1h-1zM14 25h1v1h-1zM18 25h1v1h-1zM20 25h2v1h-2zM25 25h3v1h-3zM30 25h2v1h-2zM34 25h2v1h-2zM1 26h1v1h-1zM5 26h2v1h-2zM12 26h2v1h-2zM16 26h2v1h-2zM19 26h1v1h-1zM21 26h1v1h-1zM23 26h1v1h-1zM26 26h5v1h-5zM33 26h2v1h-2zM36 26h1v1h-1zM1 27h1v1h-1zM3 27h1v1h-1zM9 27h4v1h-4zM14 27h1v1h-1zM18 27h1v1h-1zM21 27h1v1h-1zM24 27h1v1h-1zM26 27h1v1h-1zM30 27h1v1h-1zM36 27h1v1h-1zM0 28h1v1h-1zM3 28h8v1h-8zM12 28h7v1h-7zM20 28h1v1h-1zM22 28h1v1h-1zM24 28h3v1h-3zM28 28h1v1h-1zM30 28h1v1h-1zM32 28h3v1h-3zM9 29h7v1h-7zM17 29h1v1h-1zM19 29h1v1h-1zM23 29h2v1h-2zM26 29h1v1h-1zM30 29h2v1h-2zM33 29h4v1h-4zM0 30h7v1h-7zM8 30h1v1h-1zM11 30h1v1h-1zM13 30h1v1h-1zM15 30h4v1h-4zM20 30h2v1h-2zM23 30h2v1h-2zM26 30h6v1h-6zM33 30h4v1h-4zM0 31h1v1h-1zM6 31h1v1h-1zM14 31h1v1h-1zM16 31h1v1h-1zM19 31h3v1h-3zM23 31h2v1h-2zM28 31h1v1h-1zM31 31h1v1h-1zM33 31h2v1h-2zM0 32h1v1h-1zM2 32h3v1h-3zM6 32h1v1h-1zM8 32h2v1h-2zM11 32h1v1h-1zM14 32h3v1h-3zM28 32h1v1h-1zM35 32h1v1h-1zM0 33h1v1h-1zM2 33h3v1h-3zM6 33h1v1h-1zM12 33h1v1h-1zM15 33h3v1h-3zM20 33h1v1h-1zM22 33h6v1h-6zM29 33h2v1h-2zM32 33h4v1h-4zM0 34h1v1h-1zM2 34h3v1h-3zM6 34h1v1h-1zM8 34h1v1h-1zM12 34h4v1h-4zM17 34h1v1h-1zM20 34h3v1h-3zM25 34h1v1h-1zM27 34h2v1h-2zM30 34h7v1h-7zM0 35h1v1h-1zM6 35h1v1h-1zM8 35h1v1h-1zM10 35h1v1h-1zM17 35h3v1h-3zM22 35h1v1h-1zM24 35h1v1h-1zM35 35h1v1h-1zM0 36h7v1h-7zM9 36h1v1h-1zM11 36h2v1h-2zM14 36h1v1h-1zM17 36h4v1h-4zM23 36h1v1h-1zM27 36h1v1h-1zM29 36h1v1h-1zM31 36h3v1h-3zM35 36h1v1h-1z" fill="#000"/></svg>
<div class="a" style="left:2300px;top:950px;width:300px;text-align:center;font-size:24px;line-height:40px;font-weight:bold;color:#262626;letter-spacing:-0.25px">小镇程序员</div>
<div class="a" style="left:2300px;top:988px;width:300px;text-align:center;font-size:24px;line-height:40px;color:#595959;letter-spacing:0px">代码与生活，还有钱途</div>
<svg class="a" style="left:2597px;top:726px" width="207" height="207" viewBox="0 0 37 37" shape-rendering="crispEdges"><path d="M0 0h7v1h-7zM13 0h1v1h-1zM16 0h4v1h-4zM22 0h1v1h-1zM27 0h2v1h-2zM30 0h7v1h-7zM0 1h1v1h-1zM6 1h1v1h-1zM11 1h8v1h-8zM20 1h3v1h-3zM25 1h4v1h-4zM30 1h1v1h-1zM36 1h1v1h-1zM0 2h1v1h-1zM2 2h3v1h-3zM6 2h1v1h-1zM8 2h2v1h-2zM11 2h1v1h-1zM14 2h3v1h-3zM18 2h3v1h-3zM23 2h1v1h-1zM28 2h1v1h-1zM30 2h1v1h-1zM32 2h3v1h-3zM36 2h1v1h-1zM0 3h1v1h-1zM2 3h3v1h-3zM6 3h1v1h-1zM9 3h1v1h-1zM15 3h1v1h-1zM17 3h1v1h-1zM20 3h3v1h-3zM25 3h3v1h-3zM30 3h1v1h-1zM32 3h3v1h-3zM36 3h1v1h-1zM0 4h1v1h-1zM2 4h3v1h-3zM6 4h1v1h-1zM8 4h6v1h-6zM16 4h1v1h-1zM18 4h7v1h-7zM26 4h3v1h-3zM30 4h1v1h-1zM32 4h3v1h-3zM36 4h1v1h-1zM0 5h1v1h-1zM6 5h1v1h-1zM10 5h1v1h-1zM12 5h1v1h-1zM14 5h2v1h-2zM17 5h1v1h-1zM19 5h1v1h-1zM23 5h1v1h-1zM27 5h2v1h-2zM30 5h1v1h-1zM36 5h1v1h-1zM0 6h7v1h-7zM8 6h1v1h-1zM10 6h1v1h-1zM12 6h1v1h-1zM14 6h1v1h-1zM16 6h1v1h-1zM18 6h1v1h-1zM20 6h1v1h-1zM22 6h1v1h-1zM24 6h1v1h-1zM26 6h1v1h-1zM28 6h1v1h-1zM30 6h7v1h-7zM8 7h1v1h-1zM10 7h1v1h-1zM15 7h1v1h-1zM17 7h3v1h-3zM22 7h1v1h-1zM24 7h3v1h-3zM28 7h1v1h-1zM1 8h1v1h-1zM3 8h4v1h-4zM9 8h2v1h-2zM12 8h4v1h-4zM17 8h1v1h-1zM19 8h1v1h-1zM22 8h1v1h-1zM26 8h2v1h-2zM29 8h2v1h-2zM32 8h1v1h-1zM35 8h1v1h-1zM0 9h2v1h-2zM4 9h1v1h-1zM8 9h1v1h-1zM10 9h1v1h-1zM16 9h1v1h-1zM26 9h1v1h-1zM28 9h1v1h-1zM34 9h2v1h-2zM1 10h2v1h-2zM5 10h3v1h-3zM10 10h1v1h-1zM12 10h2v1h-2zM16 10h1v1h-1zM18 10h2v1h-2zM21 10h3v1h-3zM25 10h2v1h-2zM29 10h1v1h-1zM35 10h2v1h-2zM0 11h3v1h-3zM4 11h2v1h-2zM7 11h2v1h-2zM11 11h1v1h-1zM13 11h2v1h-2zM17 11h1v1h-1zM19 11h3v1h-3zM26 11h1v1h-1zM32 11h2v1h-2zM35 11h2v1h-2zM0 12h3v1h-3zM4 12h3v1h-3zM8 12h1v1h-1zM10 12h3v1h-3zM20 12h2v1h-2zM27 12h3v1h-3zM32 12h3v1h-3zM1 13h2v1h-2zM4 13h2v1h-2zM7 13h2v1h-2zM12 13h1v1h-1zM24 13h1v1h-1zM27 13h2v1h-2zM32 13h2v1h-2zM36 13h1v1h-1zM0 14h3v1h-3zM5 14h3v1h-3zM25 14h2v1h-2zM30 14h1v1h-1zM33 14h1v1h-1zM35 14h1v1h-1zM0 15h1v1h-1zM2 15h4v1h-4zM8 15h1v1h-1zM10 15h2v1h-2zM25 15h1v1h-1zM31 15h1v1h-1zM34 15h2v1h-2zM4 16h1v1h-1zM6 16h2v1h-2zM10 16h2v1h-2zM24 16h5v1h-5zM30 16h3v1h-3zM34 16h2v1h-2zM1 17h1v1h-1zM3 17h1v1h-1zM5 17h1v1h-1zM7 17h1v1h-1zM11 17h2v1h-2zM26 17h1v1h-1zM28 17h2v1h-2zM31 17h1v1h-1zM33 17h4v1h-4zM1 18h1v1h-1zM3 18h1v1h-1zM5 18h2v1h-2zM10 18h1v1h-1zM12 18h1v1h-1zM24 18h2v1h-2zM29 18h1v1h-1zM0 19h1v1h-1zM2 19h4v1h-4zM7 19h4v1h-4zM25 19h1v1h-1zM28 19h2v1h-2zM31 19h1v1h-1zM33 19h1v1h-1zM0 20h2v1h-2zM5 20h3v1h-3zM9 20h1v1h-1zM12 20h1v1h-1zM24 20h1v1h-1zM28 20h1v1h-1zM31 20h1v1h-1zM33 20h2v1h-2zM0 21h2v1h-2zM4 21h1v1h-1zM7 21h2v1h-2zM12 21h1v1h-1zM24 21h1v1h-1zM26 21h1v1h-1zM29 21h1v1h-1zM0 22h1v1h-1zM2 22h2v1h-2zM5 22h2v1h-2zM9 22h4v1h-4zM24 22h2v1h-2zM27 22h1v1h-1zM31 22h2v1h-2zM34 22h1v1h-1zM3 23h1v1h-1zM7 23h2v1h-2zM10 23h3v1h-3zM24 23h1v1h-1zM26 23h3v1h-3zM31 23h2v1h-2zM35 23h1v1h-1zM0 24h1v1h-1zM2 24h1v1h-1zM4 24h8v1h-8zM14 24h4v1h-4zM22 24h5v1h-5zM30 24h3v1h-3zM34 24h2v1h-2zM1 25h1v1h-1zM4 25h1v1h-1zM7 25h3v1h-3zM11 25h1v1h-1zM16 25h1v1h-1zM18 25h1v1h-1zM21 25h1v1h-1zM24 25h3v1h-3zM29 25h1v1h-1zM31 25h2v1h-2zM34 25h1v1h-1zM36 25h1v1h-1zM0 26h1v1h-1zM3 26h2v1h-2zM6 26h1v1h-1zM8 26h1v1h-1zM12 26h3v1h-3zM16 26h2v1h-2zM23 26h1v1h-1zM25 26h6v1h-6zM34 26h3v1h-3zM0 27h1v1h-1zM3 27h1v1h-1zM5 27h1v1h-1zM7 27h2v1h-2zM10 27h2v1h-2zM13 27h1v1h-1zM16 27h3v1h-3zM20 27h1v1h-1zM26 27h1v1h-1zM30 27h1v1h-1zM33 27h1v1h-1zM36 27h1v1h-1zM0 28h3v1h-3zM4 28h1v1h-1zM6 28h1v1h-1zM11 28h4v1h-4zM16 28h1v1h-1zM19 28h4v1h-4zM25 28h2v1h-2zM28 28h1v1h-1zM30 28h1v1h-1zM32 28h1v1h-1zM9 29h1v1h-1zM14 29h1v1h-1zM17 29h2v1h-2zM21 29h2v1h-2zM25 29h2v1h-2zM30 29h5v1h-5zM0 30h7v1h-7zM8 30h3v1h-3zM12 30h4v1h-4zM20 30h1v1h-1zM22 30h10v1h-10zM35 30h1v1h-1zM0 31h1v1h-1zM6 31h1v1h-1zM8 31h1v1h-1zM10 31h1v1h-1zM12 31h2v1h-2zM15 31h2v1h-2zM19 31h5v1h-5zM25 31h4v1h-4zM30 31h3v1h-3zM34 31h1v1h-1zM0 32h1v1h-1zM2 32h3v1h-3zM6 32h1v1h-1zM8 32h3v1h-3zM13 32h1v1h-1zM16 32h1v1h-1zM18 32h3v1h-3zM22 32h1v1h-1zM24 32h1v1h-1zM26 32h3v1h-3zM30 32h1v1h-1zM32 32h5v1h-5zM0 33h1v1h-1zM2 33h3v1h-3zM6 33h1v1h-1zM8 33h1v1h-1zM10 33h1v1h-1zM13 33h2v1h-2zM17 33h5v1h-5zM29 33h1v1h-1zM33 33h1v1h-1zM0 34h1v1h-1zM2 34h3v1h-3zM6 34h1v1h-1zM9 34h3v1h-3zM15 34h1v1h-1zM18 34h1v1h-1zM21 34h1v1h-1zM23 34h3v1h-3zM27 34h1v1h-1zM30 34h3v1h-3zM34 34h3v1h-3zM0 35h1v1h-1zM6 35h1v1h-1zM8 35h1v1h-1zM10 35h2v1h-2zM13 35h2v1h-2zM18 35h2v1h-2zM23 35h1v1h-1zM27 35h1v1h-1zM30 35h2v1h-2zM33 35h2v1h-2zM36 35h1v1h-1zM0 36h7v1h-7zM11 36h2v1h-2zM14 36h2v1h-2zM18 36h2v1h-2zM26 36h4v1h-4zM31 36h2v1h-2zM36 36h1v1h-1z" fill="#000"/></svg>
<div class="a" style="left:2550px;top:950px;width:300px;text-align:center;font-size:24px;line-height:40px;font-weight:bold;color:#262626;letter-spacing:0px">1024创新实验室</div>
<div class="a" style="left:2550px;top:988px;width:300px;text-align:center;font-size:24px;line-height:40px;color:#595959;letter-spacing:0.33px">官方账号</div>
<svg class="a" style="left:2170px;top:798px" width="64" height="62" viewBox="0 0 64 62"><ellipse cx="24" cy="24" rx="20" ry="17" fill="#7bc843" stroke="#fff" stroke-width="2"/><path d="M12 38L10 46L20 40Z" fill="#7bc843"/><circle cx="17" cy="20" r="2.6" fill="#173b12"/><circle cx="31" cy="20" r="2.6" fill="#173b12"/><ellipse cx="42" cy="38" rx="17" ry="14" fill="#f4f4f4" stroke="#cfcfcf" stroke-width="1.2"/><path d="M50 49L53 56L45 51Z" fill="#f4f4f4"/><circle cx="36" cy="36" r="2.2" fill="#555"/><circle cx="48" cy="36" r="2.2" fill="#555"/></svg>
<div class="a" style="left:2424px;top:806px;width:54px;height:54px;border-radius:6px;background:#fff;box-shadow:0 0 2px rgba(0,0,0,.25)"></div>
<svg class="a" style="left:2427px;top:809px" width="48" height="48" viewBox="0 0 48 48"><rect width="48" height="48" fill="#e8eef2"/><path d="M4 10Q24 -2 46 12L40 22Q24 14 8 20Z" fill="#222"/><path d="M12 20Q24 16 38 22L36 40Q26 46 14 40Z" fill="#f2d8c2"/><path d="M2 48L8 34Q18 42 30 40L40 48Z" fill="#3a4a5a"/><path d="M14 28h6M26 28h8" stroke="#333" stroke-width="2"/></svg>
<div class="a" style="left:2672px;top:806px;width:54px;height:54px;border-radius:6px;background:#fff;box-shadow:0 0 2px rgba(0,0,0,.25)"></div>
<svg class="a" style="left:2675px;top:809px" width="48" height="48" viewBox="0 0 48 48"><ellipse cx="24" cy="14" rx="12" ry="9" fill="none" stroke="#1890ff" stroke-width="3"/><ellipse cx="24" cy="14" rx="5" ry="4" fill="#1890ff"/><text x="24" y="33" text-anchor="middle" font-family="Liberation Sans" font-weight="bold" font-size="12" fill="#1890ff">1024</text><rect x="8" y="36" width="32" height="7" fill="#1890ff"/></svg>
<!--/MID-->
<!--BOT-->
<div class="card" style="left:414px;top:1064px;width:799px;height:400px"></div>
<div class="a" style="left:416px;top:1072px;width:6px;height:60px;background:#1890ff"></div>
<div class="a" style="left:416px;top:1142px;width:795px;height:2px;background:#f0f0f0"></div>
<svg class="a" style="left:414px;top:1064px" width="80" height="80" viewBox="0 0 80 80"><path d="M42.3 26.4V41.4H57.1A14.8 14.8 0 1 1 42.3 26.4Z" fill="#e6f7ff" stroke="#1890ff" stroke-width="2.5" stroke-linejoin="miter"/><path d="M46.9 24.3V36.7H59.7A12.6 12.6 0 0 0 46.9 24.3Z" fill="#e6f7ff" stroke="#1890ff" stroke-width="2.5"/></svg>
<div class="a" style="left:489px;top:1088px;font-size:28px;line-height:40px;color:#262626;letter-spacing:0.5px">【1024创新实验室】上班摸鱼次数</div>
<div class="a" style="left:567px;top:1206px;width:46px;height:24px;border-radius:5px;background:#5470c6"></div>
<div class="a" style="left:624px;top:1200px;font-size:25px;line-height:36px;color:#333">初晓</div>
<div class="a" style="left:697px;top:1206px;width:46px;height:24px;border-radius:5px;background:#91cc75"></div>
<div class="a" style="left:754px;top:1200px;font-size:25px;line-height:36px;color:#333">善逸</div>
<div class="a" style="left:827px;top:1206px;width:46px;height:24px;border-radius:5px;background:#fac858"></div>
<div class="a" style="left:884px;top:1200px;font-size:25px;line-height:36px;color:#333">胡克</div>
<div class="a" style="left:957px;top:1206px;width:46px;height:24px;border-radius:5px;background:#ee6666"></div>
<div class="a" style="left:1014px;top:1200px;font-size:25px;line-height:36px;color:#333">罗伊</div>
<svg class="a" style="left:0;top:0" width="1300" height="1491" viewBox="0 0 1300 1491"><path d="M829.80 1263.28A165.00 165.00 0 0 1 829.80 1591.52L829.80 1547.50A121.30 121.30 0 0 0 829.80 1307.30Z" fill="#5470c6" stroke="#5470c6" stroke-width="30" stroke-linejoin="round"/><path d="M795.80 1591.52A165.00 165.00 0 0 1 657.16 1372.63L696.95 1391.44A121.30 121.30 0 0 0 795.80 1547.50Z" fill="#91cc75" stroke="#91cc75" stroke-width="30" stroke-linejoin="round"/><path d="M671.69 1341.89A165.00 165.00 0 0 1 749.09 1275.20L761.81 1317.34A121.30 121.30 0 0 0 711.48 1360.70Z" fill="#fac858" stroke="#fac858" stroke-width="30" stroke-linejoin="round"/><path d="M781.64 1265.37A165.00 165.00 0 0 1 795.80 1263.28L795.80 1307.30A121.30 121.30 0 0 0 794.36 1307.51Z" fill="#ee6666" stroke="#ee6666" stroke-width="30" stroke-linejoin="round"/></svg>
<div class="card" style="left:1233px;top:1064px;width:798px;height:400px"></div>
<div class="a" style="left:1235px;top:1072px;width:6px;height:60px;background:#1890ff"></div>
<div class="a" style="left:1235px;top:1142px;width:794px;height:2px;background:#f0f0f0"></div>
<svg class="a" style="left:1233px;top:1064px" width="80" height="80" viewBox="0 0 80 80"><g transform="translate(1.2 1.2)"><rect x="28.5" y="24.5" width="29" height="29" fill="#e6f7ff" stroke="#1890ff" stroke-width="2.6"/><g fill="#1890ff"><circle cx="35.5" cy="33" r="1.6"/><circle cx="35.5" cy="39" r="1.6"/><circle cx="35.5" cy="45" r="1.6"/><rect x="39.5" y="31.8" width="11" height="2.4"/><rect x="39.5" y="37.8" width="11" height="2.4"/><rect x="39.5" y="43.8" width="11" height="2.4"/></g></g></svg>
<div class="a" style="left:1308px;top:1088px;font-size:28px;line-height:40px;color:#262626;letter-spacing:0.3px">【1024创新实验室】人员饭量</div>
<div class="a" style="left:1386px;top:1176px;width:50px;height:28px;border-radius:6px;background:#5470c6"></div>
<div class="a" style="left:1446px;top:1172px;font-size:25px;line-height:36px;color:#333">善逸</div>
<div class="a" style="left:1514px;top:1176px;width:50px;height:28px;border-radius:6px;background:#91cc75"></div>
<div class="a" style="left:1574px;top:1172px;font-size:25px;line-height:36px;color:#333">胡克</div>
<div class="a" style="left:1642px;top:1176px;width:50px;height:28px;border-radius:6px;background:#fac858"></div>
<div class="a" style="left:1702px;top:1172px;font-size:25px;line-height:36px;color:#333">开云</div>
<div class="a" style="left:1770px;top:1176px;width:50px;height:28px;border-radius:6px;background:#ee6666"></div>
<div class="a" style="left:1830px;top:1172px;font-size:25px;line-height:36px;color:#333">初晓</div>
<div class="a" style="left:1240px;top:1267px;width:84px;text-align:right;font-size:26px;line-height:34px;color:#6e7079">200</div>
<div class="a" style="left:1240px;top:1363px;width:84px;text-align:right;font-size:26px;line-height:34px;color:#6e7079">150</div>
<div class="a" style="left:1340px;top:1286px;width:635px;height:2px;background:#e0e6f1"></div>
<div class="a" style="left:1340px;top:1382px;width:635px;height:2px;background:#e0e6f1"></div>
<div class="a" style="left:1405.5px;top:1287px;width:22.3px;height:143px;background:#fac858"></div>
<div class="a" style="left:1478.7px;top:1287px;width:22.3px;height:143px;background:#5470c6"></div>
<div class="a" style="left:1606px;top:1381.4px;width:22.3px;height:48.59999999999991px;background:#5470c6"></div>
<div class="a" style="left:1940.5px;top:1287px;width:22.3px;height:143px;background:#ee6666"></div>
<div class="card" style="left:2051px;top:1064px;width:799px;height:400px"></div>
<div class="a" style="left:2053px;top:1072px;width:6px;height:60px;background:#1890ff"></div>
<div class="a" style="left:2053px;top:1142px;width:795px;height:2px;background:#f0f0f0"></div>
<svg class="a" style="left:2051px;top:1064px" width="80" height="80" viewBox="0 0 80 80"><path d="M44.00,23.00 L48.82,32.87 L59.69,34.40 L51.80,42.03 L53.70,52.85 L44.00,47.70 L34.30,52.85 L36.20,42.03 L28.31,34.40 L39.18,32.87Z" fill="#e6f7ff" stroke="#1890ff" stroke-width="2.6" stroke-linejoin="round"/></svg>
<div class="a" style="left:2134px;top:1088px;font-size:28px;line-height:40px;color:#262626;letter-spacing:0px">已办待办</div>
<div class="a" style="left:2097px;top:1166.0px;width:707px;height:63.5px;border:2px solid #d4d4d4;border-radius:7px;background:#fff"></div>
<div class="a" style="left:2107px;top:1181.5px;width:32px;height:32px;border:2px solid #d9d9d9;border-radius:4px;background:#fff"></div>
<div class="a" style="left:2155px;top:1182.0px;font-size:28px;line-height:40px;color:#262626">为SmartAdmin前端小组分配任务</div>
<svg class="a" style="left:0;top:0" width="2873" height="1491"><path d="M2780.00,1184.60 L2783.70,1193.00 L2792.84,1193.93 L2785.99,1200.05 L2787.94,1209.02 L2780.00,1204.40 L2772.06,1209.02 L2774.01,1200.05 L2767.16,1193.93 L2776.30,1193.00Z" fill="none" stroke="#bfbfbf" stroke-width="2" stroke-linejoin="round"/></svg>
<div class="a" style="left:2097px;top:1246.2px;width:707px;height:63.5px;border:2px solid #d4d4d4;border-radius:7px;background:#fff"></div>
<div class="a" style="left:2107px;top:1261.7px;width:32px;height:32px;border:2px solid #d9d9d9;border-radius:4px;background:#fff"></div>
<div class="a" style="left:2155px;top:1262.2px;font-size:28px;line-height:40px;color:#262626">跟进团建内容事宜</div>
<svg class="a" style="left:0;top:0" width="2873" height="1491"><path d="M2780.00,1264.80 L2783.70,1273.20 L2792.84,1274.13 L2785.99,1280.25 L2787.94,1289.22 L2780.00,1284.60 L2772.06,1289.22 L2774.01,1280.25 L2767.16,1274.13 L2776.30,1273.20Z" fill="#ff8c00" stroke="#ff8c00" stroke-width="1" stroke-linejoin="round"/></svg>
<div class="a" style="left:2097px;top:1326.4px;width:707px;height:63.5px;border:2px solid #d4d4d4;border-radius:7px;background:#fff"></div>
<div class="a" style="left:2107px;top:1341.9px;width:32px;height:32px;border:2px solid #d9d9d9;border-radius:4px;background:#fff"></div>
<div class="a" style="left:2155px;top:1342.4px;font-size:28px;line-height:40px;color:#262626">跟进客户定制一个软件平台</div>
<svg class="a" style="left:0;top:0" width="2873" height="1491"><path d="M2780.00,1345.00 L2783.70,1353.40 L2792.84,1354.33 L2785.99,1360.45 L2787.94,1369.42 L2780.00,1364.80 L2772.06,1369.42 L2774.01,1360.45 L2767.16,1354.33 L2776.30,1353.40Z" fill="none" stroke="#bfbfbf" stroke-width="2" stroke-linejoin="round"/></svg>
<div class="a" style="left:2097px;top:1406.6px;width:707px;height:63.5px;border:2px solid #d4d4d4;border-radius:7px;background:#fff"></div>
<div class="a" style="left:2107px;top:1422.1px;width:32px;height:32px;border:2px solid #d9d9d9;border-radius:4px;background:#fff"></div>
<div class="a" style="left:2155px;top:1422.6px;font-size:28px;line-height:40px;color:#262626">完成项目周报</div>
<svg class="a" style="left:0;top:0" width="2873" height="1491"><path d="M2780.00,1425.20 L2783.70,1433.60 L2792.84,1434.53 L2785.99,1440.65 L2787.94,1449.62 L2780.00,1445.00 L2772.06,1449.62 L2774.01,1440.65 L2767.16,1434.53 L2776.30,1433.60Z" fill="none" stroke="#bfbfbf" stroke-width="2" stroke-linejoin="round"/></svg>
<!--/BOT-->
<!--WM-->
<div class="a" style="left:394px;top:160px;width:2479px;height:1266px;overflow:hidden;pointer-events:none">
<div class="a wm" style="left:-631.3px;top:136.0px">管理员 2022-10-28 11:20</div>
<div class="a wm" style="left:166.7px;top:136.0px">管理员 2022-10-28 11:20</div>
<div class="a wm" style="left:964.7px;top:136.0px">管理员 2022-10-28 11:20</div>
<div class="a wm" style="left:1762.7px;top:136.0px">管理员 2022-10-28 11:20</div>
<div class="a wm" style="left:-631.3px;top:536.0px">管理员 2022-10-28 11:20</div>
<div class="a wm" style="left:166.7px;top:536.0px">管理员 2022-10-28 11:20</div>
<div class="a wm" style="left:964.7px;top:536.0px">管理员 2022-10-28 11:20</div>
<div class="a wm" style="left:1762.7px;top:536.0px">管理员 2022-10-28 11:20</div>
<div class="a wm" style="left:-631.3px;top:936.0px">管理员 2022-10-28 11:20</div>
<div class="a wm" style="left:166.7px;top:936.0px">管理员 2022-10-28 11:20</div>
<div class="a wm" style="left:964.7px;top:936.0px">管理员 2022-10-28 11:20</div>
<div class="a wm" style="left:1762.7px;top:936.0px">管理员 2022-10-28 11:20</div>
<div class="a wm" style="left:-631.3px;top:1336.0px">管理员 2022-10-28 11:20</div>
<div class="a wm" style="left:166.7px;top:1336.0px">管理员 2022-10-28 11:20</div>
<div class="a wm" style="left:964.7px;top:1336.0px">管理员 2022-10-28 11:20</div>
<div class="a wm" style="left:1762.7px;top:1336.0px">管理员 2022-10-28 11:20</div>
</div>
<!--/WM-->
<div id="footer">SmartAdmin V2.x @copyright 河南·洛阳【1024创新实验室】 Since 2012-2022</div>
<div id="sb"></div>
</body></html>
